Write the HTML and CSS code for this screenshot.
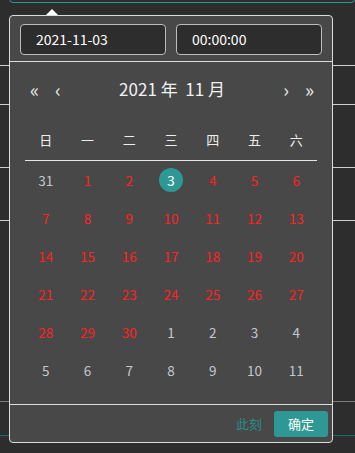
FILE: index.html
```html
<!DOCTYPE html>
<html>
<head>
  <meta charset="utf-8">
  <title>日期时间选择</title>
  <link rel="stylesheet" href="styles.css">
</head>
<body>

  <div class="form">
    <div class="field-active"></div>
    <div class="row r1"></div>
    <div class="row r2"></div>
    <div class="row r3"></div>
    <div class="row r4"></div>
    <div class="row r5 dim"></div>
    <div class="row r6 teal"></div>
  </div>

  <div class="picker">
    <div class="arrow"></div>

    <div class="time-bar">
      <div class="input">2021-11-03</div>
      <div class="input">00:00:00</div>
    </div>

    <div class="head">
      <div class="nav">
        <span class="btn">&laquo;</span>
        <span class="btn">&lsaquo;</span>
      </div>
      <div class="title">2021 年&nbsp; 11 月</div>
      <div class="nav">
        <span class="btn">&rsaquo;</span>
        <span class="btn">&raquo;</span>
      </div>
    </div>

    <div class="weeks">
      <span>日</span><span>一</span><span>二</span><span>三</span><span>四</span><span>五</span><span>六</span>
    </div>

    <div class="days" id="days"></div>

    <div class="foot">
      <a class="now" href="#">此刻</a>
      <a class="ok" href="#">确定</a>
    </div>
  </div>

  <script>
    // 2021-11: 31 Oct shown first, month runs 1..30, then next month 1..11
    var days = document.getElementById('days');
    var cells = [{ d: 31, cls: 'other' }];
    for (var i = 1; i <= 30; i++) {
      cells.push({ d: i, cls: i == 3 ? 'cur selected' : 'cur' });
    }
    for (var j = 1; j <= 11; j++) {
      cells.push({ d: j, cls: 'other' });
    }
    cells.forEach(function(c) {
      var el = document.createElement('span');
      el.className = 'day ' + c.cls;
      el.innerHTML = '<i>' + c.d + '</i>';
      days.appendChild(el);
    });
  </script>

</body>
</html>
```

FILE: styles.css
```css
body {
  margin: 0px;
  font-family: "Noto Sans CJK SC", "Noto Sans", sans-serif;
  background-color: #2d2d2d;
  color: #fff;
  height: 453px;
  overflow: hidden;
  position: relative;
}
.form {
  padding-left: 9px;
}
.field-active {
  height: 30px;
  margin-top: -29px;
  border: 1px solid #2a9793;
  border-radius: 4px;
}
.row {
  border-top: 1px solid #cfcfcf;
  margin-left: -9px;
}
.r1 { margin-top: 62px; }
.r2 { margin-top: 38px; }
.r3 { margin-top: 62px; }
.r4 { margin-top: 52px; }
.r5 { margin-top: 180px; }
.r6 { margin-top: 33px; }
.row.dim {
  border-top-color: #7a7a7a;
}
.row.teal {
  border-top-color: #1d6e6b;
}

.picker {
  position: absolute;
  left: 9px;
  top: 15px;
  width: 322px;
  height: 426px;
  background-color: #484848;
  border: 1px solid #dcdcdc;
  border-radius: 4px;
  display: flex;
  flex-direction: column;
}
.arrow {
  position: absolute;
  top: -7px;
  left: 36px;
  width: 0;
  height: 0;
  border-left: 6px solid transparent;
  border-right: 6px solid transparent;
  border-bottom: 6px solid #fff;
}
.time-bar {
  display: flex;
  gap: 10px;
  padding: 8px 10px 6px;
  border-bottom: 1px solid #dcdcdc;
}
.input {
  flex: 1;
  height: 29px;
  line-height: 29px;
  padding-left: 15px;
  font-size: 14px;
  background-color: #2d2d2d;
  border: 1px solid #bdbdbd;
  border-radius: 4px;
}
.head {
  display: flex;
  align-items: center;
  height: 52px;
  padding: 0 18px 2px 20px;
}
.nav {
  display: flex;
  gap: 16px;
  width: 50px;
}
.nav:last-child {
  justify-content: flex-end;
}
.btn {
  font-size: 19px;
  color: #e6e6e6;
  line-height: 1;
}
.title {
  flex: 1;
  text-align: center;
  font-size: 17px;
  color: #f2f2f2;
}
.weeks {
  display: grid;
  grid-template-columns: repeat(7, 1fr);
  margin: 0 15px;
  height: 42px;
  padding-top: 2px;
  align-items: center;
  text-align: center;
  font-size: 13px;
  color: #eee;
  border-bottom: 1px solid #e6e6e6;
}
.days {
  display: grid;
  grid-template-columns: repeat(7, 1fr);
  grid-auto-rows: 38px;
  margin: 0 15px;
  padding-bottom: 15px;
  font-size: 13.5px;
  text-align: center;
}
.day {
  display: flex;
  align-items: center;
  justify-content: center;
}
.day i {
  font-style: normal;
  width: 24px;
  height: 24px;
  line-height: 24px;
  border-radius: 50%;
}
.day.cur {
  color: #ff2222;
}
.day.other {
  color: #c3c6cc;
}
.day.selected i {
  background-color: #2e9994;
  color: #fff;
  font-size: 14px;
}
.foot {
  display: flex;
  justify-content: flex-end;
  align-items: center;
  gap: 12px;
  flex: 1;
  padding-right: 4px;
  border-top: 1px solid #dcdcdc;
}
.now {
  font-size: 13px;
  color: #2b8c88;
  text-decoration: none;
}
.ok {
  font-size: 13px;
  color: #fff;
  text-decoration: none;
  background-color: #2e9994;
  border-radius: 3px;
  width: 54px;
  height: 26px;
  line-height: 26px;
  text-align: center;
}
```
